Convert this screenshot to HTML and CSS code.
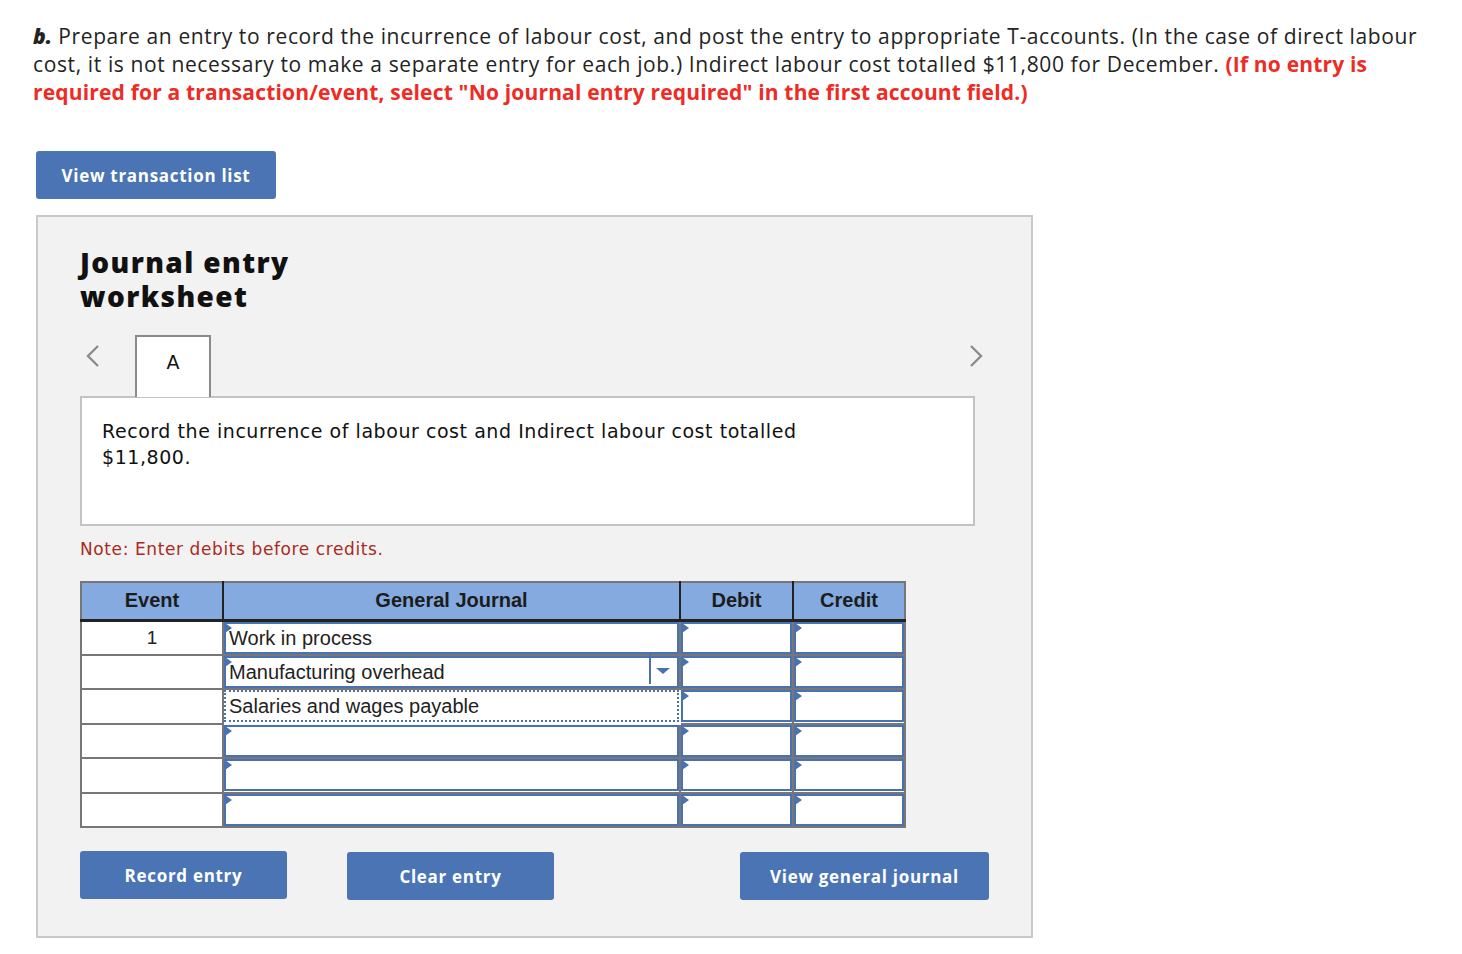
FILE: index.html
```html
<!DOCTYPE html>
<html>
<head>
<meta charset="utf-8">
<link rel="stylesheet" href="styles.css">
</head>
<body>
<p class="prompt"><b class="lbl">b.</b> Prepare an entry to record the incurrence of labour cost, and post the entry to appropriate T-accounts. (In the case of direct labour<br>cost, it is not necessary to make a separate entry for each job.) Indirect labour cost totalled $11,800 for December. <strong class="warn">(If no entry is<br>required for a transaction/event, select "No journal entry required" in the first account field.)</strong></p>

<button class="btn btn-top">View transaction list</button>

<div class="panel">
  <h2 class="title">Journal entry<br>worksheet</h2>

  <div class="tabs">
    <span class="nav nav-left"><svg width="16" height="24" viewBox="0 0 16 24"><path d="M13 2 L3 12 L13 22" fill="none" stroke="#8c8c8c" stroke-width="2.4"/></svg></span>
    <div class="tab">A</div>
    <span class="nav nav-right"><svg width="16" height="24" viewBox="0 0 16 24"><path d="M3 2 L13 12 L3 22" fill="none" stroke="#8c8c8c" stroke-width="2.4"/></svg></span>
  </div>

  <div class="desc">Record the incurrence of labour cost and Indirect labour cost totalled<br>$11,800.</div>

  <p class="note">Note: Enter debits before credits.</p>

  <table class="jt">
    <colgroup>
      <col class="c-ev"><col class="c-gj"><col class="c-dr"><col class="c-cr">
    </colgroup>
    <thead>
      <tr><th>Event</th><th>General Journal</th><th>Debit</th><th>Credit</th></tr>
    </thead>
    <tbody>
      <tr>
        <td class="ev">1</td>
        <td><div class="inp"><span class="flag"></span>Work in process</div></td>
        <td><div class="inp"><span class="flag"></span></div></td>
        <td><div class="inp"><span class="flag"></span></div></td>
      </tr>
      <tr>
        <td class="ev"></td>
        <td><div class="inp"><span class="flag"></span>Manufacturing overhead<span class="dd-line"></span><span class="dd-arrow"></span></div></td>
        <td><div class="inp"><span class="flag"></span></div></td>
        <td><div class="inp"><span class="flag"></span></div></td>
      </tr>
      <tr>
        <td class="ev"></td>
        <td class="fcell"><div class="inp focus">Salaries and wages payable</div></td>
        <td><div class="inp"><span class="flag"></span></div></td>
        <td><div class="inp"><span class="flag"></span></div></td>
      </tr>
      <tr>
        <td class="ev"></td>
        <td><div class="inp"><span class="flag"></span></div></td>
        <td><div class="inp"><span class="flag"></span></div></td>
        <td><div class="inp"><span class="flag"></span></div></td>
      </tr>
      <tr>
        <td class="ev"></td>
        <td><div class="inp"><span class="flag"></span></div></td>
        <td><div class="inp"><span class="flag"></span></div></td>
        <td><div class="inp"><span class="flag"></span></div></td>
      </tr>
      <tr>
        <td class="ev"></td>
        <td><div class="inp"><span class="flag"></span></div></td>
        <td><div class="inp"><span class="flag"></span></div></td>
        <td><div class="inp"><span class="flag"></span></div></td>
      </tr>
    </tbody>
  </table>

  <div class="actions">
    <button class="btn btn-rec">Record entry</button>
    <button class="btn btn-clr">Clear entry</button>
    <button class="btn btn-view">View general journal</button>
  </div>
</div>
</body>
</html>
```

FILE: styles.css
```css
* { box-sizing: border-box; }
body {
  margin: 0;
  background: #ffffff;
  font-family: "Open Sans", sans-serif;
  color: #222;
}
.prompt {
  margin: 0;
  padding: 22px 0 0 33px;
  width: 1462px;
  white-space: nowrap;
  font-family: "Open Sans", sans-serif;
  font-size: 21px;
  line-height: 28px;
  letter-spacing: 0.62px;
  color: #232323;
}
.lbl { font-style: italic; font-weight: 800; letter-spacing: 0; }
.warn { color: #ee2b24; font-weight: 700; letter-spacing: 0.17px; }

.btn {
  border: none;
  border-radius: 3px;
  background: #4a74b4;
  color: #fff;
  font-family: "Open Sans", sans-serif;
  font-weight: 700;
  font-size: 17px;
  letter-spacing: 0.7px;
  height: 48px;
  padding: 0;
  cursor: pointer;
}
.btn-top {
  display: block;
  margin: 45px 0 0 36px;
  width: 240px;
}

.panel {
  margin: 16px 0 0 36px;
  width: 997px;
  height: 723px;
  border: 2px solid #c9c9c9;
  background: #f2f2f2;
  padding: 28px 0 0 42px;
}
.title {
  margin: 0;
  font-family: "Open Sans", sans-serif;
  font-weight: 800;
  font-size: 28px;
  line-height: 34px;
  letter-spacing: 1.4px;
  color: #111;
}
.tabs {
  display: flex;
  align-items: flex-start;
  width: 894px;
  margin-top: 22px;
  height: 61px;
}
.nav { display: block; margin-top: 9px; }
.nav-left { margin-left: 5px; }
.nav-right { margin-left: auto; margin-right: -10px; }
.tab {
  width: 76px;
  height: 62px;
  margin-left: 34px;
  background: #fff;
  border: 2px solid #8a8a8a;
  border-bottom: none;
  text-align: center;
  font-family: "DejaVu Sans", Verdana, sans-serif;
  font-size: 19px;
  line-height: 50px;
  color: #111;
  position: relative;
  z-index: 1;
}
.desc {
  width: 895px;
  height: 130px;
  background: #fff;
  border: 2px solid #c3c3c3;
  padding: 20px 20px 0 20px;
  font-family: "DejaVu Sans", Verdana, sans-serif;
  font-size: 19px;
  line-height: 26px;
  letter-spacing: 0.55px;
  color: #111;
}
.note {
  margin: 13px 0 0 0;
  font-family: "DejaVu Sans", Verdana, sans-serif;
  font-size: 17px;
  line-height: 20px;
  letter-spacing: 0.6px;
  color: #a92a22;
}

.jt {
  margin-top: 22px;
  border-collapse: collapse;
  border: 2px solid #777;
  font-family: "Liberation Sans", Arial, sans-serif;
  background: #fff;
}
.c-ev { width: 142px; }
.c-gj { width: 457px; }
.c-dr { width: 113px; }
.c-cr { width: 112px; }
.jt th {
  background: #84aadf;
  height: 38px;
  font-size: 20px;
  font-weight: 700;
  color: #1c1c1c;
  border-left: 2px solid #222;
  border-bottom: 3px solid #222;
  padding: 0;
}
.jt th:first-child { border-left: none; }
.jt td {
  border: 2px solid #777;
  height: 34.5px;
  padding: 0;
  vertical-align: top;
}
.jt td.fcell { border-color: #fff; }
.jt td.ev {
  text-align: center;
  font-size: 19px;
  vertical-align: middle;
  color: #222;
}
.inp {
  position: relative;
  height: 32px;
  border: 2px solid #4a72b0;
  font-size: 20px;
  line-height: 28px;
  padding-left: 3px;
  color: #222;
  white-space: nowrap;
}
.inp.focus {
  border: 2px dotted #4a72b0;
  height: 32px;
  padding-left: 3px;
  line-height: 29px;
}
.flag {
  position: absolute;
  left: -1px;
  top: -1px;
  width: 0; height: 0;
  border-top: 5px solid transparent;
  border-bottom: 5px solid transparent;
  border-left: 7px solid #4a72b0;
}
.dd-line {
  position: absolute;
  right: 26px;
  top: -6px;
  width: 2px;
  height: 32px;
  background: #4a72b0;
}
.dd-arrow {
  position: absolute;
  right: 7px;
  top: 10px;
  width: 0; height: 0;
  border-left: 7px solid transparent;
  border-right: 7px solid transparent;
  border-top: 6px solid #4a72b0;
}

.actions {
  display: flex;
  align-items: flex-start;
  margin-top: 23px;
}
.btn-rec { width: 207px; }
.btn-clr { width: 207px; margin-left: 60px; margin-top: 1px; }
.btn-view { width: 249px; margin-left: 186px; margin-top: 1px; }
```
